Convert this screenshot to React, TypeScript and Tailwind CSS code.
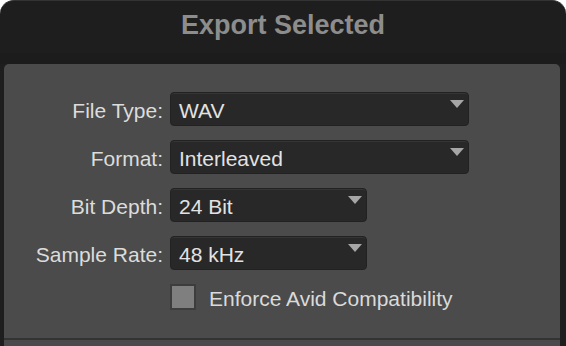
import React from "react";

interface SelectProps {
  value: string;
  wide?: boolean;
}

function Select({ value, wide = false }: SelectProps) {
  return (
    <div
      className={`flex h-[34px] items-start rounded-[4px] border border-[#222222] bg-[#282828] shadow-[inset_0_1px_0_#353535] ${
        wide ? "w-[299px]" : "w-[197px]"
      }`}
    >
      <span className="flex-1 self-center pl-[8px] pt-[2px] leading-none text-[#e2e2e2]">
        {value}
      </span>
      <svg
        width="14"
        height="8"
        viewBox="0 0 14 8"
        className="mr-[4px] mt-[7px]"
      >
        <path d="M0 0 H14 L7 8 Z" fill="#a6a6a6" />
      </svg>
    </div>
  );
}

const rows = [
  { label: "File Type:", value: "WAV", wide: true },
  { label: "Format:", value: "Interleaved", wide: true },
  { label: "Bit Depth:", value: "24 Bit", wide: false },
  { label: "Sample Rate:", value: "48 kHz", wide: false },
];

export default function App() {
  return (
    <div
      className="flex h-[346px] w-[566px] flex-col overflow-hidden rounded-t-[14px] border-t border-[#333333] bg-[#1e1e1e] text-[21px]"
      style={{ fontFamily: '"Liberation Sans", Arial, sans-serif' }}
    >
      <div className="h-[52px] pt-[11px] text-center text-[27px] font-bold leading-none text-[#8d8d8d]">
        Export Selected
      </div>
      <div className="h-[11px] bg-[#1c1c1c]" />
      <div className="ml-[4px] mr-[6px] flex flex-col">
        <div className="h-[274px] rounded-t-[5px] bg-[#4b4b4b] pt-[28px]">
          <div className="grid grid-cols-[159px_auto] items-center gap-x-[7px] gap-y-[14px]">
            {rows.map((row) => (
              <React.Fragment key={row.label}>
                <span className="pt-[2px] text-right leading-none text-[#dcdcdc]">
                  {row.label}
                </span>
                <Select value={row.value} wide={row.wide} />
              </React.Fragment>
            ))}
            <span />
            <div className="flex items-center gap-[13px]">
              <div className="h-[26px] w-[26px] border-2 border-[#3d3d3d] bg-[#7f7f7f]" />
              <span className="pt-[2px] leading-none text-[#dadada]">
                Enforce Avid Compatibility
              </span>
            </div>
          </div>
        </div>
        <div className="h-[2px] bg-[#333333]" />
        <div className="h-[6px] bg-[#4a4a4a]" />
      </div>
    </div>
  );
}
